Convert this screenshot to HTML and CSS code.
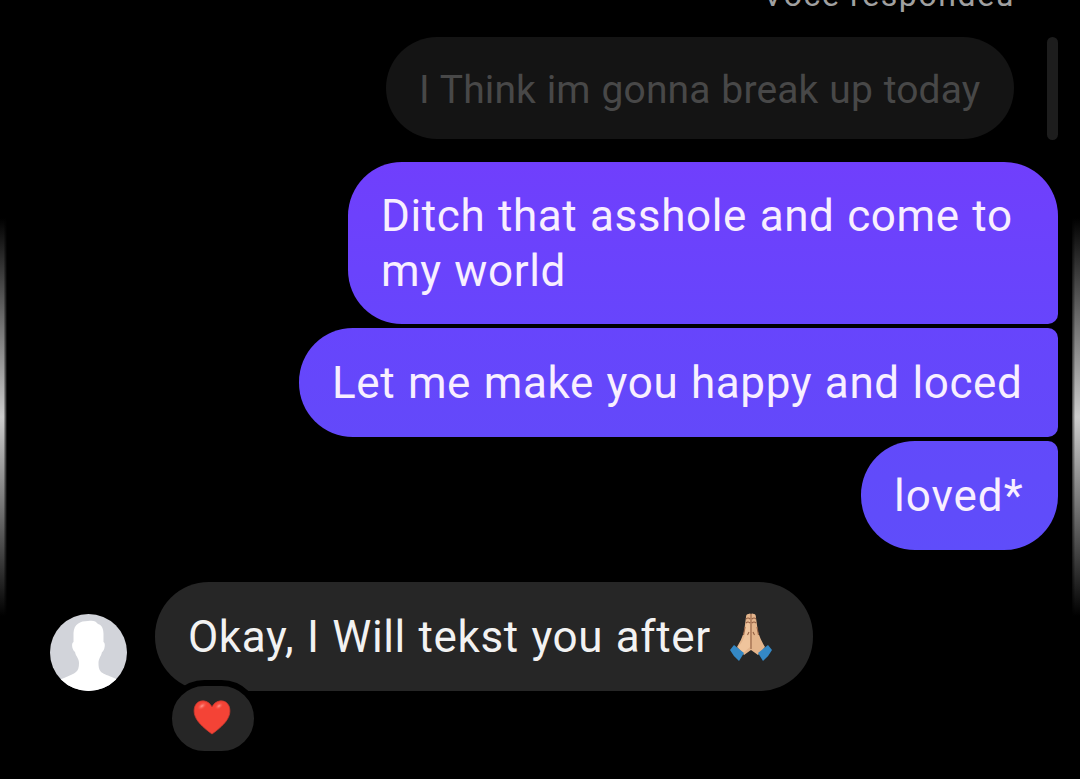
FILE: index.html
```html
<!DOCTYPE html>
<html lang="pt">
<head>
<meta charset="utf-8">
<title>Chat</title>
<link rel="stylesheet" href="styles.css">
</head>
<body>
<main class="chat">
  <div class="edge edge-left"></div>
  <div class="edge edge-right"></div>
  <p class="reply-label">Você respondeu</p>
  <div class="quote-row">
    <div class="quote"><span class="quote-text">I Think im gonna break up today</span></div>
    <div class="quote-bar"></div>
  </div>
  <section class="sent">
    <div class="bubble first"><p>Ditch that asshole and come to<br>my world</p></div>
    <div class="bubble middle"><p>Let me make you happy and loced</p></div>
    <div class="bubble last"><p>loved*</p></div>
  </section>
  <section class="received">
    <svg class="avatar" viewBox="0 0 77 77" aria-hidden="true">
      <defs><clipPath id="round"><circle cx="38.5" cy="38.5" r="38.5"/></clipPath></defs>
      <g clip-path="url(#round)">
        <rect width="77" height="77" fill="#d2d4da"/>
        <path fill="#fff" d="M38 7C43 6 46 7 48 10C52 11 53.500 15 53.500 20V28C56 29 54.500 37 52 38C51 43 48.500 44 48.500 49C48.500 59 52 59 64 64C69 66 72 71 72 78H5C6 70 8 66 14 64C26 59 29 58 29 49C29 44 26 43 25 38C22 36 21 29 23.500 28V19C24 10 30 7 38 7Z"/>
      </g>
    </svg>
    <div class="message">
      <div class="reply">
        <span class="reply-text">Okay, I Will tekst you after</span>
        <svg class="hands" viewBox="0 0 42 50" aria-hidden="true">
          <path fill="#e4b58c" d="M16 5Q16 2 18.500 2Q20 1 21 2Q22 1 24 2Q26 2 26 6L28 20Q31 29 35 35L28 43L21 38L14 43L7 35Q11 29 14 20Z"/>
          <path fill="#efc49c" d="M16.500 11L20 8L20 35L13 41L8 35Q14 29 15 21Z"/>
          <path fill="none" stroke="#936044" stroke-width="1.100" d="M21 2V37M16 7Q18 5 20 7M22 7Q24 5 26 7M16 11Q18 9 20 11M22 11Q24 9 26 11M15 15L13.500 23M27 15L28.500 23M19 20L17.500 23M23 20L24.500 23"/>
          <path fill="#3488c5" d="M4 33L14 41L9 49Q3 44 0 38ZM38 33L28 41L33 49Q39 44 42 38Z"/>
        </svg>
      </div>
      <div class="reaction">
        <svg class="heart" viewBox="0 0 38 35" aria-hidden="true">
          <defs><radialGradient id="shine"><stop offset="0" stop-color="#ff9a91"/><stop offset="1" stop-color="#f44336" stop-opacity="0"/></radialGradient></defs>
          <path fill="#f44336" stroke="#c9382e" stroke-width=".8" d="M19 7C15-1 5-1 2 6C-2 17 8 26 19 34C30 26 40 17 36 6C33-1 23-1 19 7Z"/>
          <ellipse cx="9" cy="6" rx="6" ry="3.500" fill="url(#shine)" transform="rotate(-35 9 6)"/>
          <ellipse cx="26" cy="6" rx="5" ry="3.200" fill="url(#shine)" transform="rotate(-35 26 6)"/>
        </svg>
      </div>
    </div>
  </section>
</main>
</body>
</html>
```
FILE: styles.css
```css
* { box-sizing: border-box; }
body { margin: 0; background: #000; }
p { margin: 0; }
.chat {
  position: relative;
  width: 1080px;
  height: 779px;
  overflow: hidden;
  background: #000;
  font-family: Roboto, sans-serif;
  font-size: 44px;
  line-height: 55px;
  letter-spacing: .6px;
  word-spacing: 1.2px;
  color: #f8efff;
  white-space: nowrap;
}
.edge { position: absolute; top: 218px; height: 398px; }
.edge-left {
  left: 0;
  width: 7px;
  background: linear-gradient(90deg, transparent 50%, #000), linear-gradient(#000, #777 28%, #ccc 50%, #777 72%, #000);
}
.edge-right {
  right: 0;
  width: 8px;
  background: linear-gradient(270deg, transparent 60%, #000a), linear-gradient(#000, #777 28%, #ccc 50%, #777 72%, #000);
}
.chat .reply-label {
  height: 61px;
  margin-top: -24px;
  padding-right: 65px;
  text-align: right;
  font-size: 32px;
  line-height: 38px;
  letter-spacing: 1.6px;
  word-spacing: 0;
  color: #a0a0a0;
}
.quote-row { display: flex; justify-content: flex-end; gap: 33px; padding-right: 22px; }
.quote {
  width: 628px;
  height: 102px;
  padding: 27px 33px 20px;
  border-radius: 51px;
  background: #141414;
  color: #484848;
  font-size: 39px;
  line-height: 53px;
}
.quote-text { letter-spacing: .15px; word-spacing: .9px; }
.quote-bar { width: 11px; height: 103px; border-radius: 6px; background: #1d1d1d; }
.sent {
  display: flex;
  flex-direction: column;
  align-items: flex-end;
  gap: 4px;
  padding: 22px 22px 0 0;
}
.bubble { padding: 28px 33px 20px; }
.first { width: 710px; height: 162px; padding-top: 27px; border-radius: 54px 54px 10px 54px; background: linear-gradient(#703ffc, #6745fc); }
.middle { width: 759px; height: 109px; border-radius: 54px 10px 10px 54px; background: linear-gradient(#6745fc, #6349fa); }
.last { width: 197px; height: 109px; letter-spacing: 1px; border-radius: 54px 10px 54px 54px; background: linear-gradient(#624afa, #5f4dfa); }
.received { display: flex; align-items: flex-start; gap: 28px; padding: 32px 0 0 50px; }
.avatar { width: 77px; height: 77px; margin-top: 32px; }
.reply {
  display: flex;
  align-items: flex-start;
  width: 658px;
  height: 109px;
  padding: 28px 33px 20px;
  border-radius: 54px;
  background: #262626;
  color: #f2f2f2;
}
.reply-text { width: 542px; }
.hands { width: 42px; height: 50px; flex: none; margin-top: 2px; }
.reaction {
  position: relative;
  display: flex;
  justify-content: center;
  width: 94px;
  height: 77px;
  margin: -11px 0 0 11px;
  padding-top: 14px;
  border: 6px solid #000;
  border-radius: 39px;
  background: #262626;
}
.heart { width: 38px; height: 35px; margin-right: 3px; }
```
